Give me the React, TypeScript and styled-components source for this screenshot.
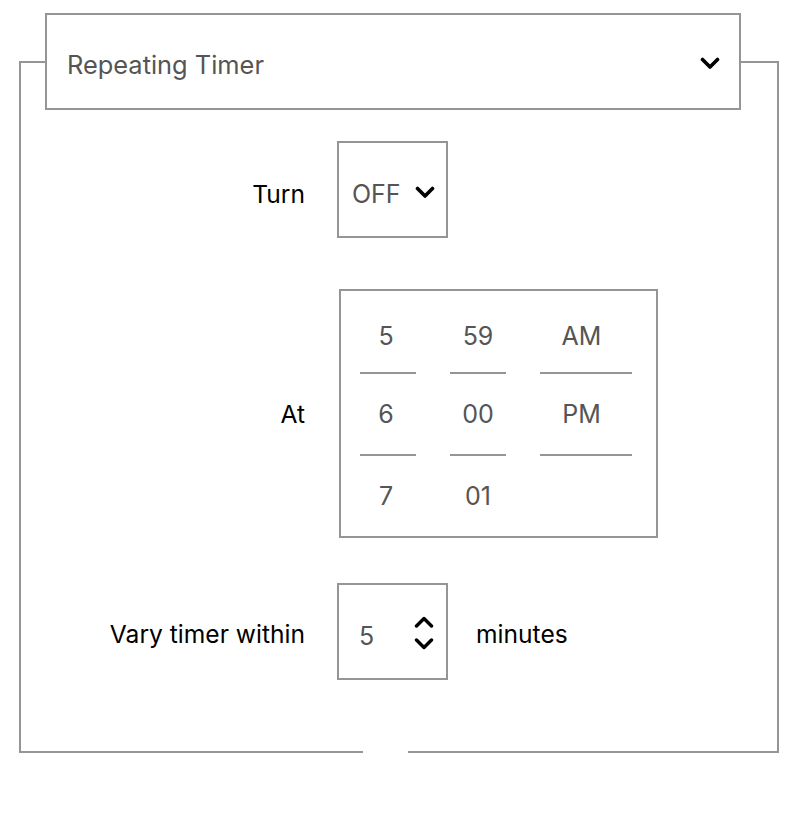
import React from "react";
import styled, { createGlobalStyle } from "styled-components";

const GlobalStyle = createGlobalStyle`
  html, body {
    margin: 0;
    padding: 0;
    background: #ffffff;
  }
  body {
    font-family: Inter, "Noto Sans", "Liberation Sans", sans-serif;
    color: #000000;
  }
  * { box-sizing: border-box; }
`;

const BORDER = "#959595";
const VALUE = "#555555";

const Page = styled.div`
  padding: 13px 0 40px 19px;
`;

const Fieldset = styled.fieldset`
  position: relative;
  width: 760px;
  margin: 0;
  padding: 31px 0 71px 24px;
  border: 2px solid ${BORDER};
  min-inline-size: 0;
`;

const Legend = styled.legend`
  display: flex;
  align-items: center;
  justify-content: space-between;
  width: 696px;
  height: 97px;
  margin: 0;
  padding: 8px 19px 0 20px;
  border: 2px solid ${BORDER};
  background: #ffffff;
  font-size: 25.4px;
  color: ${VALUE};
`;

const LegendText = styled.span`
  line-height: 1.2;
`;

const Chevron = styled.svg<{ $shift?: number }>`
  display: block;
  flex: none;
  margin-top: ${(p) => p.$shift ?? 0}px;
`;

const Rows = styled.div`
  display: flex;
  flex-direction: column;
  gap: 48px;
`;

const Row = styled.div<{ $offset?: number }>`
  display: flex;
  align-items: center;
  gap: 32px;
  margin-top: ${(p) => p.$offset ?? 0}px;
  margin-bottom: ${(p) => -(p.$offset ?? 0)}px;
`;

const Label = styled.div<{ $drop?: number }>`
  width: 260px;
  padding-top: ${(p) => (p.$drop ?? 0) * 2}px;
  text-align: right;
  font-size: 24.6px;
  line-height: 1.2;
  color: #000000;
`;

const ControlGroup = styled.div`
  display: flex;
  align-items: center;
  gap: 28px;
`;

const Box = styled.div<{ $gap: number; $padL: number; $padR: number; $padT: number }>`
  display: flex;
  align-items: center;
  gap: ${(p) => p.$gap}px;
  width: 111px;
  height: 97px;
  padding: ${(p) => p.$padT}px ${(p) => p.$padR}px 0 ${(p) => p.$padL}px;
  border: 2px solid ${BORDER};
  font-size: 25px;
  color: ${VALUE};
`;

const BoxValue = styled.span<{ $grow?: boolean }>`
  line-height: 1.2;
  flex: ${(p) => (p.$grow ? "1" : "none")};
`;

const Stepper = styled.div`
  display: flex;
  flex-direction: column;
  gap: 10px;
  margin-top: -6px;
`;

const Picker = styled.div`
  display: flex;
  gap: 34px;
  width: 319px;
  height: 249px;
  margin-left: 2px;
  padding: 9px 24px 0 19px;
  border: 2px solid ${BORDER};
`;

const Column = styled.div<{ $width: number }>`
  display: flex;
  flex-direction: column;
  width: ${(p) => p.$width}px;
`;

const Cell = styled.div<{ $first?: boolean; $divider?: boolean; $padR?: number }>`
  display: flex;
  align-items: center;
  justify-content: center;
  height: ${(p) => (p.$first ? 72 : 80)}px;
  padding-right: ${(p) => p.$padR ?? 0}px;
  border-bottom: ${(p) => (p.$divider ? `2px solid ${BORDER}` : "none")};
  box-sizing: content-box;
  font-size: 25px;
  line-height: 1.2;
  color: ${VALUE};
`;

const Suffix = styled.span`
  padding-top: 6px;
  font-size: 24.6px;
  line-height: 1.2;
  color: #000000;
`;

const Notch = styled.span`
  position: absolute;
  left: 342px;
  bottom: -2px;
  width: 45px;
  height: 2px;
  background: #ffffff;
`;

const ChevronDown = ({ shift }: { shift?: number }) => (
  <Chevron $shift={shift} width="20" height="13" viewBox="0 0 20 13" aria-hidden="true">
    <polyline
      points="2.5,2.5 10,10 17.5,2.5"
      fill="none"
      stroke="#000"
      strokeWidth="3.6"
      strokeLinecap="round"
      strokeLinejoin="round"
    />
  </Chevron>
);

const ChevronUp = () => (
  <Chevron width="20" height="12" viewBox="0 0 20 12" aria-hidden="true">
    <polyline
      points="2.5,10 10,2.5 17.5,10"
      fill="none"
      stroke="#000"
      strokeWidth="3.4"
      strokeLinecap="round"
      strokeLinejoin="round"
    />
  </Chevron>
);

const ChevronSmallDown = () => (
  <Chevron width="20" height="12" viewBox="0 0 20 12" aria-hidden="true">
    <polyline
      points="2.5,2 10,9.5 17.5,2"
      fill="none"
      stroke="#000"
      strokeWidth="3.4"
      strokeLinecap="round"
      strokeLinejoin="round"
    />
  </Chevron>
);

type ColDef = { width: number; padR: number; items: string[]; lastDivider: boolean };

const columns: ColDef[] = [
  { width: 56, padR: 4, items: ["5", "6", "7"], lastDivider: false },
  { width: 56, padR: 0, items: ["59", "00", "01"], lastDivider: false },
  { width: 92, padR: 9, items: ["AM", "PM"], lastDivider: true },
];

export default function App() {
  return (
    <>
      <GlobalStyle />
      <Page>
        <Fieldset>
          <Legend>
            <LegendText>Repeating Timer</LegendText>
            <ChevronDown shift={-4} />
          </Legend>
          <Rows>
            <Row>
              <Label $drop={5}>Turn</Label>
              <Box $gap={14} $padL={13} $padR={12} $padT={9}>
                <BoxValue>OFF</BoxValue>
                <ChevronDown shift={-3} />
              </Box>
            </Row>
            <Row $offset={3}>
              <Label $drop={1}>At</Label>
              <Picker>
                {columns.map((col, ci) => (
                  <Column key={ci} $width={col.width}>
                    {col.items.map((item, i) => (
                      <Cell
                        key={item}
                        $first={i === 0}
                        $padR={col.padR}
                        $divider={i < col.items.length - 1 || col.lastDivider}
                      >
                        {item}
                      </Cell>
                    ))}
                  </Column>
                ))}
              </Picker>
            </Row>
            <Row>
              <Label $drop={3}>Vary timer within</Label>
              <ControlGroup>
                <Box $gap={0} $padL={20} $padR={12} $padT={9}>
                  <BoxValue $grow>5</BoxValue>
                  <Stepper>
                    <ChevronUp />
                    <ChevronSmallDown />
                  </Stepper>
                </Box>
                <Suffix>minutes</Suffix>
              </ControlGroup>
            </Row>
          </Rows>
          <Notch />
        </Fieldset>
      </Page>
    </>
  );
}
